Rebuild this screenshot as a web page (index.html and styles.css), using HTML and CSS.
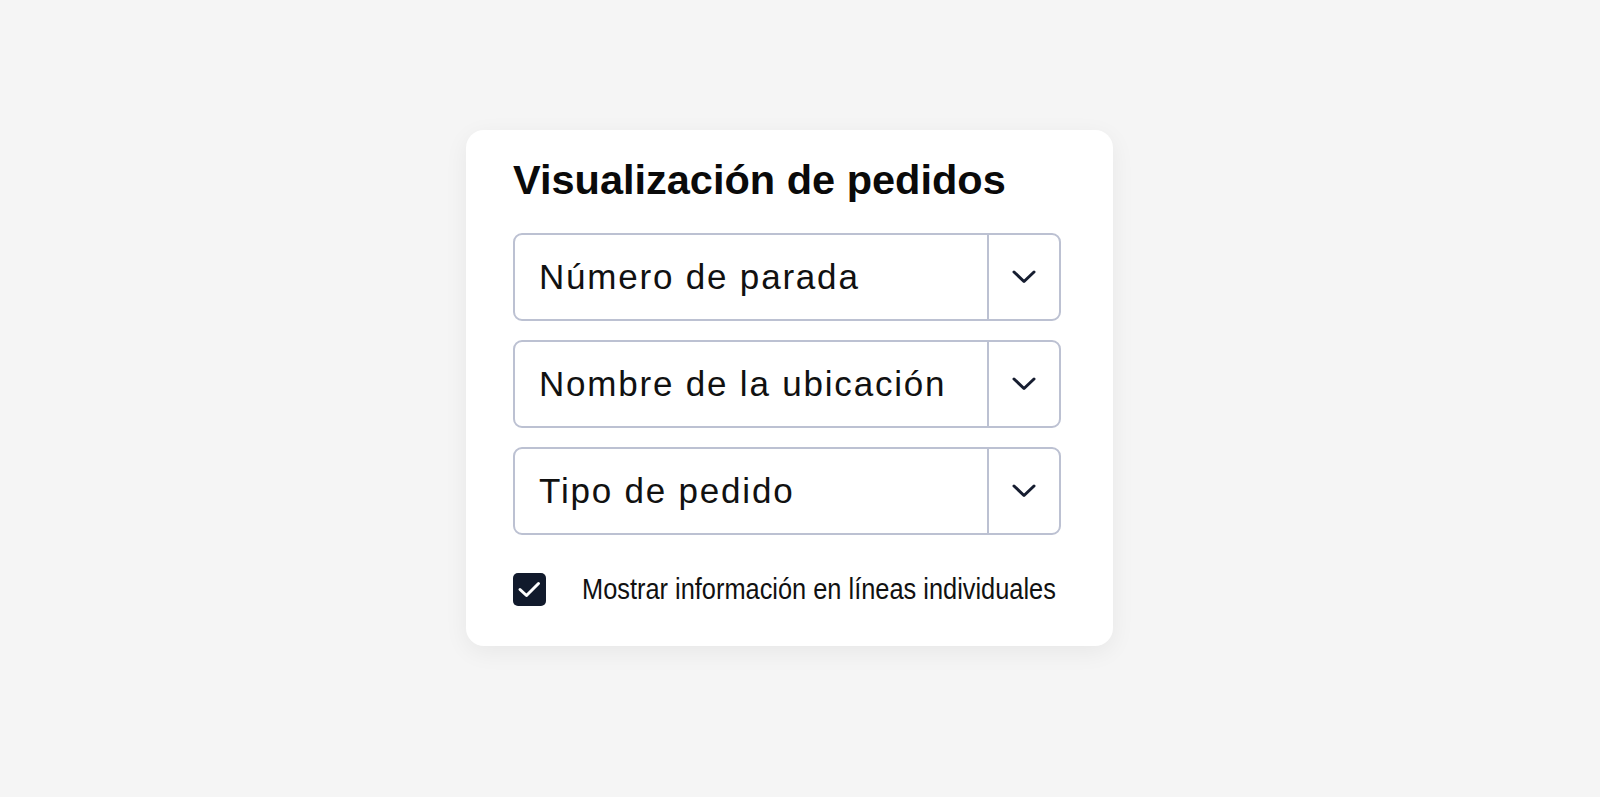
FILE: index.html
```html
<!DOCTYPE html>
<html lang="es">
<head>
    <meta charset="UTF-8">
    <meta name="viewport" content="width=device-width, initial-scale=1.0">
    <title>Visualización de pedidos</title>
    <link rel="stylesheet" href="styles.css">
</head>
<body>
    <div class="page">
        <div class="card">
            <h1>Visualización de pedidos</h1>

            <div class="select-list">
                <div class="select">
                    <span class="select-value">Número de parada</span>
                    <span class="select-toggle">
                        <svg width="24" height="14" viewBox="0 0 24 14"><path d="M2 2 L12 11.5 L22 2" fill="none" stroke="#161d30" stroke-width="3" stroke-linecap="round" stroke-linejoin="round"/></svg>
                    </span>
                </div>
                <div class="select">
                    <span class="select-value">Nombre de la ubicación</span>
                    <span class="select-toggle">
                        <svg width="24" height="14" viewBox="0 0 24 14"><path d="M2 2 L12 11.5 L22 2" fill="none" stroke="#161d30" stroke-width="3" stroke-linecap="round" stroke-linejoin="round"/></svg>
                    </span>
                </div>
                <div class="select">
                    <span class="select-value">Tipo de pedido</span>
                    <span class="select-toggle">
                        <svg width="24" height="14" viewBox="0 0 24 14"><path d="M2 2 L12 11.5 L22 2" fill="none" stroke="#161d30" stroke-width="3" stroke-linecap="round" stroke-linejoin="round"/></svg>
                    </span>
                </div>
            </div>

            <label class="check-row">
                <span class="checkbox">
                    <svg width="33" height="33" viewBox="0 0 33 33"><path d="M7 16.5 L13.5 22.5 L25.5 10.5" fill="none" stroke="#ffffff" stroke-width="3" stroke-linecap="round" stroke-linejoin="round"/></svg>
                </span>
                <span class="check-label">Mostrar información en líneas individuales</span>
            </label>
        </div>
    </div>
</body>
</html>
```

FILE: styles.css
```css
/* General */
html,
body {
    height: 100%;
    background: #f5f5f5;
}

body {
    margin: 0;
    padding: 0;
    font-family: 'Liberation Sans', Arial, sans-serif;
    color: #111111;
}

.page {
    box-sizing: border-box;
    min-height: 797px;
    padding: 130px 0 0 466px;
    background: #f5f5f5;
}

/* Card */
.card {
    box-sizing: border-box;
    width: 647px;
    height: 516px;
    padding: 27px 52px 40px 47px;
    background: #ffffff;
    border-radius: 18px;
    box-shadow: 0 6px 24px rgba(0, 0, 0, 0.06);
}

.card h1 {
    margin: 0 0 30px 0;
    font-size: 41.5px;
    line-height: 46px;
    font-weight: bold;
    color: #0a0a0a;
}

/* Selects */
.select-list {
    display: flex;
    flex-direction: column;
    gap: 19px;
}

.select {
    box-sizing: border-box;
    display: flex;
    height: 88px;
    border: 2px solid #bcc1d2;
    border-radius: 9px;
}

.select-value {
    flex: 1;
    display: flex;
    align-items: center;
    padding-left: 24px;
    font-size: 35px;
    letter-spacing: 1.8px;
    color: #111111;
}

.select-toggle {
    width: 70px;
    display: flex;
    align-items: center;
    justify-content: center;
    border-left: 2px solid #bcc1d2;
}

/* Checkbox */
.check-row {
    display: flex;
    align-items: center;
    margin-top: 38px;
}

.checkbox {
    flex: none;
    width: 33px;
    height: 33px;
    border-radius: 5px;
    background: #111a2c;
    display: flex;
}

.check-label {
    margin-left: 36px;
    font-size: 29px;
    line-height: 33px;
    white-space: nowrap;
    color: #111111;
    transform: scaleX(0.875);
    transform-origin: left center;
}
```
